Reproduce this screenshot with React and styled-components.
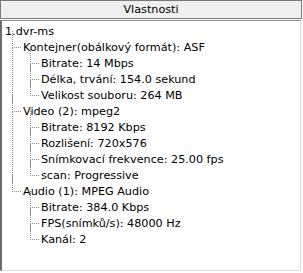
import React from "react";
import styled, { createGlobalStyle } from "styled-components";

const Global = createGlobalStyle`
  html, body { margin: 0; padding: 0; background: #ffffff; }
  body { font-family: Tahoma, "DejaVu Sans", "Liberation Sans", sans-serif; }
`;

const tree = {
  label: "1.dvr-ms",
  children: [
    {
      label: "Kontejner(obálkový formát): ASF",
      children: [
        { label: "Bitrate: 14 Mbps" },
        { label: "Délka, trvání: 154.0 sekund" },
        { label: "Velikost souboru: 264 MB" },
      ],
    },
    {
      label: "Video (2): mpeg2",
      children: [
        { label: "Bitrate: 8192 Kbps" },
        { label: "Rozlišení: 720x576" },
        { label: "Snímkovací frekvence: 25.00 fps" },
        { label: "scan: Progressive" },
      ],
    },
    {
      label: "Audio (1): MPEG Audio",
      children: [
        { label: "Bitrate: 384.0 Kbps" },
        { label: "FPS(snímků/s): 48000 Hz" },
        { label: "Kanál: 2" },
      ],
    },
  ],
};

function Node({ node, root, last }) {
  return (
    <Item $root={root} $last={last}>
      <Label>{node.label}</Label>
      {node.children && (
        <List>
          {node.children.map((c, i) => (
            <Node key={c.label} node={c} last={i === node.children.length - 1} />
          ))}
        </List>
      )}
    </Item>
  );
}

export default function App() {
  return (
    <Panel>
      <Global />
      <Header>Vlastnosti</Header>
      <Body>
        <List $top>
          <Node node={tree} root last />
        </List>
      </Body>
    </Panel>
  );
}

const Panel = styled.div`
  width: 303px;
  height: 273px;
  display: flex;
  flex-direction: column;
  font-size: 11.2px;
  color: #000;
`;

const Header = styled.div`
  height: 17px;
  margin-right: 1px;
  border: 1px solid #7a7a7a;
  background: #efefef;
  display: flex;
  align-items: center;
  justify-content: center;
`;

const Body = styled.div`
  flex: 1;
  margin: 1px 2px 2px 0;
  border-left: 2px solid #6d6d6d;
  border-top: 1px solid #8a8a8a;
  border-right: 1px solid #dcdcdc;
  border-bottom: 1px solid #dcdcdc;
  background: #fff;
  padding: 2px 0 0 3px;
`;

const List = styled.ul`
  list-style: none;
  margin: 0;
  padding: 0 0 0 ${(p) => (p.$top ? 0 : 18)}px;
`;

const Item = styled.li`
  position: relative;

  &::before {
    content: "";
    display: ${(p) => (p.$root ? "none" : "block")};
    position: absolute;
    left: -11px;
    top: -8px;
    width: 8px;
    height: 16px;
    border-left: 1px dotted #8c8c8c;
    border-bottom: 1px dotted #8c8c8c;
  }

  &::after {
    content: "";
    display: ${(p) => (p.$root || p.$last ? "none" : "block")};
    position: absolute;
    left: -11px;
    top: 8px;
    bottom: 0;
    border-left: 1px dotted #8c8c8c;
  }
`;

const Label = styled.div`
  height: 16px;
  line-height: 18px;
  white-space: nowrap;
`;
